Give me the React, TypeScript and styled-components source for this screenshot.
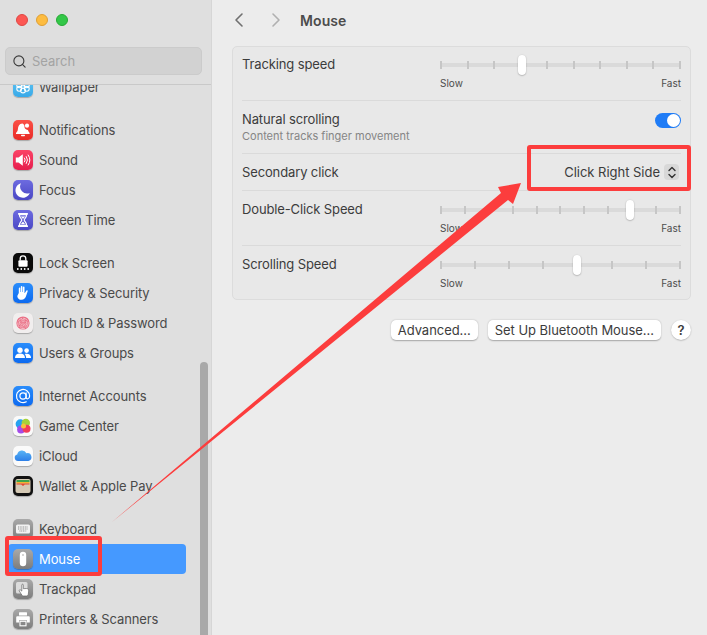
import React from 'react';
import styled, { createGlobalStyle } from 'styled-components';
import { ChevronLeft, ChevronRight, Search } from 'lucide-react';

const GlobalStyle = createGlobalStyle`
  html, body { margin: 0; padding: 0; height: 100%; }
  body { font-family: Inter, "Liberation Sans", sans-serif; overflow: hidden; }
`;

const ScWindow = styled.div`
  position: relative;
  display: flex;
  width: 707px;
  height: 635px;
  overflow: hidden;
  background: #ececec;
`;

const ScSidebar = styled.aside`
  position: relative;
  flex: 0 0 212px;
  display: flex;
  flex-direction: column;
  background: #dfdfdf;
  border-right: 1px solid #d6d6d6;
  box-sizing: border-box;
  overflow: hidden;
`;

const ScSideHead = styled.div`
  flex: 0 0 85px;
  box-sizing: border-box;
  padding: 14px 5px 0;
  border-bottom: 1px solid #c9c9c9;
`;

const ScLights = styled.div`
  display: flex;
  gap: 8px;
  padding-left: 11px;
  margin-bottom: 21px;
`;

const ScLight = styled.span<{ $c: string; $b: string }>`
  width: 12px;
  height: 12px;
  border-radius: 50%;
  box-sizing: border-box;
  background: ${p => p.$c};
  border: 1px solid ${p => p.$b};
`;

const ScSearch = styled.div`
  height: 28px;
  width: 197px;
  box-sizing: border-box;
  display: flex;
  align-items: center;
  gap: 5px;
  padding-left: 6px;
  background: #d2d2d2;
  border: 1px solid #cbcbcb;
  border-radius: 5px;
  font-size: 13px;
  color: #a3a3a3;
`;

const ScClip = styled.div`
  flex: 1;
  overflow: hidden;
`;

const ScList = styled.div`
  margin-top: -13px;
  display: flex;
  flex-direction: column;
  gap: 13px;
`;

const ScGroup = styled.div`
  display: flex;
  flex-direction: column;
`;

const ScRow = styled.div<{ $active?: boolean }>`
  height: 30px;
  margin: 0 25px 0 8px;
  padding-left: 5px;
  display: flex;
  align-items: center;
  gap: 6px;
  border-radius: 4px;
  font-size: 13px;
  letter-spacing: -0.1px;
  color: ${p => (p.$active ? '#fff' : '#4a4a4a')};
  background: ${p => (p.$active ? '#4599ff' : 'transparent')};
`;

const ScTile = styled.span<{ $bg: string }>`
  flex: 0 0 20px;
  height: 20px;
  border-radius: 5px;
  background: ${p => p.$bg};
  box-shadow: 0 1px 1px rgba(0, 0, 0, 0.25);
  display: flex;
  align-items: center;
  justify-content: center;
  svg { display: block; }
`;

const ScScrollbar = styled.div`
  position: absolute;
  left: 200px;
  top: 362px;
  width: 8px;
  height: 290px;
  border-radius: 4px;
  background: #a9a9a9;
`;

const ScMain = styled.main`
  flex: 1;
  display: flex;
  flex-direction: column;
  padding: 0 16px 0 20px;
  min-width: 0;
`;

const ScToolbar = styled.div`
  height: 46px;
  flex: 0 0 46px;
  display: flex;
  align-items: center;
  padding-bottom: 6px;
  box-sizing: border-box;
  color: #6b6b6b;
`;

const ScNav = styled.span<{ $off?: boolean }>`
  display: flex;
  margin-right: 13px;
  color: ${p => (p.$off ? '#b0b0b0' : '#707070')};
  &:first-child { margin-left: -5px; }
`;

const ScTitle = styled.h1`
  margin: 0 0 0 -1px;
  font-size: 14px;
  font-weight: 600;
  letter-spacing: 0.1px;
  color: #4c4c4c;
`;

const ScCard = styled.section`
  background: #e8e8e8;
  border: 1px solid #dcdcdc;
  border-radius: 5px;
  padding: 0 9px;
  box-sizing: border-box;
`;

const ScCardRow = styled.div<{ $h: number; $last?: boolean; $center?: boolean }>`
  height: ${p => p.$h}px;
  box-sizing: border-box;
  display: flex;
  justify-content: space-between;
  align-items: ${p => (p.$center ? 'center' : 'stretch')};
  border-bottom: ${p => (p.$last ? 'none' : '1px solid #dadada')};
`;

const ScLabel = styled.div<{ $top?: number }>`
  padding-top: ${p => p.$top ?? 0}px;
  font-size: 13px;
  line-height: 16px;
  letter-spacing: -0.13px;
  color: #3c3c3c;
`;

const ScLabelStack = styled.div`
  padding-top: 10px;
`;

const ScSub = styled.div`
  margin-top: 2px;
  font-size: 11px;
  line-height: 14px;
  color: #858585;
`;

const ScSliderCol = styled.div<{ $top: number }>`
  width: 241px;
  padding-top: ${p => p.$top}px;
`;

const ScTrack = styled.div`
  position: relative;
  height: 16px;
  display: flex;
  justify-content: space-between;
  align-items: center;
  &::before {
    content: '';
    position: absolute;
    left: 0;
    right: 0;
    top: 6px;
    height: 4px;
    background: #dadada;
  }
`;

const ScTick = styled.span`
  position: relative;
  width: 2px;
  height: 8px;
  background: #c6c6c6;
`;

const ScThumb = styled.span<{ $left: number }>`
  position: absolute;
  top: 0;
  left: ${p => p.$left}px;
  width: 8px;
  height: 20px;
  margin-top: -2px;
  margin-left: -4px;
  border-radius: 4px;
  background: #fff;
  box-shadow: 0 0.5px 1.5px rgba(0, 0, 0, 0.35);
`;

const ScEnds = styled.div`
  display: flex;
  justify-content: space-between;
  margin-top: 4px;
  font-size: 10px;
  line-height: 13px;
  color: #4c4c4c;
`;

const ScToggle = styled.span`
  position: relative;
  align-self: flex-start;
  margin-top: 12px;
  width: 26px;
  height: 15px;
  border-radius: 8px;
  background: #1f7cf6;
  &::after {
    content: '';
    position: absolute;
    right: 1px;
    top: 1px;
    width: 13px;
    height: 13px;
    border-radius: 50%;
    background: #fff;
  }
`;

const ScSelect = styled.div`
  display: flex;
  align-items: center;
  gap: 4px;
  margin-right: 2px;
  font-size: 13px;
  letter-spacing: -0.02px;
  color: #3c3c3c;
`;

const ScStepper = styled.span`
  width: 15px;
  height: 16px;
  border-radius: 4px;
  background: #d8d8d8;
  display: flex;
  align-items: center;
  justify-content: center;
`;

const ScActions = styled.div`
  display: flex;
  justify-content: flex-end;
  align-items: center;
  gap: 10px;
  margin-top: 20px;
`;

const ScButton = styled.button`
  height: 20px;
  padding: 0 7px;
  border: none;
  border-radius: 5px;
  background: #fff;
  box-shadow: 0 0.5px 1.5px rgba(0, 0, 0, 0.3);
  font-family: inherit;
  font-size: 13px;
  letter-spacing: -0.04px;
  color: #3c3c3c;
`;

const ScHelp = styled(ScButton)`
  width: 20px;
  padding: 0;
  border-radius: 50%;
  font-weight: 600;
`;

const ScMark = styled.div<{ $x: number; $y: number; $w: number; $h: number }>`
  position: absolute;
  left: ${p => p.$x}px;
  top: ${p => p.$y}px;
  width: ${p => p.$w}px;
  height: ${p => p.$h}px;
  box-sizing: border-box;
  border: 4px solid #fc3d3d;
  border-radius: 3px;
`;

const ScArrow = styled.svg`
  position: absolute;
  left: 0;
  top: 0;
  pointer-events: none;
`;

const W = (p: { children: React.ReactNode }) => (
  <svg width="20" height="20" viewBox="0 0 20 20" fill="#fff">{p.children}</svg>
);

const ICONS: Record<string, React.ReactNode> = {
  wallpaper: (
    <W>
      <g fill="none" stroke="#fff" strokeWidth="1.1">
        <circle cx="10" cy="6.500" r="2.400" /><circle cx="10" cy="13.500" r="2.400" />
        <circle cx="6.200" cy="8.300" r="2.400" /><circle cx="13.800" cy="8.300" r="2.400" />
        <circle cx="6.200" cy="11.800" r="2.400" /><circle cx="13.800" cy="11.800" r="2.400" />
      </g>
    </W>
  ),
  bell: (
    <W>
      <path d="M9.200 3.500c-2.900.3-4.100 2.800-4.300 5.500-.1 1.700-.8 2.800-1.900 3.900v1.100h13.600v-1.100c-.9-.9-1.400-1.800-1.700-3-2.100.1-3.800-1.700-3.500-3.900.1-.8-1.300-2.600-2.200-2.500z" />
      <circle cx="14" cy="5.700" r="2.100" />
      <rect x="8" y="14.800" width="4" height="1.500" rx=".7" />
    </W>
  ),
  sound: (
    <W>
      <path d="M2.800 7.600h2.700L9.800 4.200v11.600L5.500 12.400H2.800z" />
      <path d="M11.500 8a3.200 3.200 0 0 1 0 4M13.300 6.500a6 6 0 0 1 0 7M15.200 5a8.800 8.800 0 0 1 0 10" fill="none" stroke="#fff" strokeWidth="1" strokeLinecap="round" />
    </W>
  ),
  moon: (
    <W><path d="M8 3.200a7 7 0 0 0 8.800 9.800A7.400 7.400 0 1 1 8 3.200z" /></W>
  ),
  hourglass: (
    <W>
      <rect x="5" y="3" width="10" height="1.700" rx=".6" />
      <rect x="5" y="15.300" width="10" height="1.700" rx=".6" />
      <path d="M6.400 4.700h7.200c0 3-2.400 3.800-2.400 5.300s2.400 2.300 2.400 5.300H6.400c0-3 2.400-3.800 2.400-5.300S6.400 7.700 6.400 4.700z" fill="none" stroke="#fff" strokeWidth="1.200" />
      <path d="M7.800 14.300l2.200-2.900 2.200 2.900zM7.800 6.500h4.400L10 9z" />
    </W>
  ),
  lock: (
    <W>
      <path d="M7.200 7.500V5.600a2.800 2.800 0 0 1 5.600 0v1.900" fill="none" stroke="#fff" strokeWidth="1.300" />
      <rect x="5.400" y="7.200" width="9.200" height="6.600" rx="1" />
      <g><circle cx="4.800" cy="16" r=".9" /><circle cx="8.300" cy="16" r=".9" /><circle cx="11.700" cy="16" r=".9" /><circle cx="15.200" cy="16" r=".9" /></g>
    </W>
  ),
  hand: (
    <W>
      <path d="M5.800 10V5.400c0-1.100 1.500-1.100 1.500 0V9h.5V3.800c0-1.100 1.600-1.100 1.600 0V9h.5V4.300c0-1.100 1.600-1.100 1.600 0V10l.4.100 1.200-2.200c.6-1.100 2-.4 1.500.7l-1.700 5c-.7 2-2.100 3.200-4.200 3.200-2.600 0-4.400-1.500-4.400-3.900z" />
    </W>
  ),
  finger: (
    <W>
      <circle cx="10" cy="10" r="6.600" fill="#ea6f85" />
      <g fill="none" stroke="#f7dbe0" strokeWidth=".7">
        <circle cx="10" cy="10.400" r="5.200" strokeDasharray="5 1" />
        <circle cx="10" cy="10.400" r="3.700" strokeDasharray="4 1" />
        <circle cx="10" cy="10.400" r="2.200" strokeDasharray="3 1" />
        <path d="M10 9.500v3" />
      </g>
    </W>
  ),
  users: (
    <W>
      <circle cx="7" cy="7.300" r="2.700" /><circle cx="13.600" cy="7.600" r="2.300" />
      <path d="M2 15c0-2.900 2.100-4.400 5-4.400s5 1.500 5 4.400zM13.100 15c0-1.700-.5-3-1.500-3.900 3-1.300 6.500.2 6.500 3.900z" />
    </W>
  ),
  at: (
    <W>
      <circle cx="10" cy="10" r="3.100" fill="none" stroke="#fff" strokeWidth="1.200" />
      <path d="M13.100 6.900v4.400c0 2.300 3.500 2.100 3.500-1.300A6.600 6.600 0 1 0 13.300 15.800" fill="none" stroke="#fff" strokeWidth="1.200" strokeLinecap="round" />
    </W>
  ),
  game: (
    <W>
      <circle cx="7.300" cy="8" r="4.700" fill="#27a2f0" /><circle cx="12.800" cy="7" r="4.200" fill="#a6d23a" />
      <circle cx="8" cy="13.500" r="3.900" fill="#a44be8" /><circle cx="13.500" cy="12.800" r="4" fill="#f23c5b" />
      <circle cx="10.500" cy="10" r="2.500" fill="#f6c13a" />
    </W>
  ),
  cloud: (
    <W>
      <defs>
        <linearGradient id="icloud" x1="0" y1="0" x2="0" y2="1">
          <stop offset="0" stopColor="#58b4f5" /><stop offset="1" stopColor="#2d7fe8" />
        </linearGradient>
      </defs>
      <path d="M5 15a3.300 3.300 0 0 1-.8-6.500 4.900 4.900 0 0 1 9.200-1.300 3.900 3.900 0 0 1 2 7.800z" fill="url(#icloud)" />
    </W>
  ),
  wallet: (
    <W>
      <rect x="2.500" y="3" width="15" height="14" rx="2" fill="#d5cab6" />
      <rect x="3.500" y="4" width="13" height="2" fill="#3fa34d" />
      <rect x="3.500" y="6" width="13" height="1.500" fill="#f3b430" />
      <path d="M3.500 7.500h13v1H11.800l-1.800 1.500-1.800-1.500H3.500z" fill="#e4472f" />
    </W>
  ),
  keyboard: (
    <W>
      <rect x="3" y="5.500" width="14" height="9" rx="1.500" fill="#f2f2f2" />
      <path d="M5 8h10M5 10h10M6.500 12h7" stroke="#8b8b8b" strokeWidth="1.100" strokeDasharray="1 .7" />
    </W>
  ),
  mouse: (
    <W><rect x="6.800" y="2.800" width="6.400" height="14.400" rx="3.200" /><rect x="9.500" y="5" width="1" height="2" rx=".5" fill="#a8a8a8" /></W>
  ),
  trackpad: (
    <W>
      <rect x="3" y="3" width="11.500" height="11.500" rx="1.500" fill="#dcdcdc" />
      <path d="M8.800 6c0-1.100 1.500-1.100 1.500 0v3.700l3.100-.2c1.600 0 2.500 1 2.300 2.500l-.4 3.200c-.2 1.100-.9 1.800-2.100 1.800h-2.500c-.9 0-1.400-.3-1.900-1L6.300 12c-.5-.9.500-1.700 1.300-1l1.200 1.100z" stroke="#666" strokeWidth=".7" />
    </W>
  ),
  printer: (
    <W>
      <rect x="6" y="3.200" width="8" height="3.200" rx=".5" />
      <path d="M4.500 7.300h11c.8 0 1.300.5 1.300 1.300v5H14v-2.300H6v2.300H3.200v-5c0-.8.500-1.300 1.300-1.300z" />
      <rect x="7" y="12.300" width="6" height="4.500" fill="none" stroke="#fff" strokeWidth="1.100" />
    </W>
  ),
};

type Item = { name: string; icon: string; bg: string; active?: boolean };

const GREY = 'linear-gradient(#a9a9a9, #7d7d7d)';
const BLUE = 'linear-gradient(#2a8dfb, #0d6af0)';
const INDIGO = 'linear-gradient(#6d6be0, #4a47c4)';

const GROUPS: Item[][] = [
  [{ name: 'Wallpaper', icon: 'wallpaper', bg: 'linear-gradient(#63c6f2, #38a9e8)' }],
  [
    { name: 'Notifications', icon: 'bell', bg: 'linear-gradient(#fb5147, #e92a26)' },
    { name: 'Sound', icon: 'sound', bg: 'linear-gradient(#fb4467, #e61d4d)' },
    { name: 'Focus', icon: 'moon', bg: INDIGO },
    { name: 'Screen Time', icon: 'hourglass', bg: INDIGO },
  ],
  [
    { name: 'Lock Screen', icon: 'lock', bg: '#0a0a0a' },
    { name: 'Privacy & Security', icon: 'hand', bg: BLUE },
    { name: 'Touch ID & Password', icon: 'finger', bg: '#f1eeee' },
    { name: 'Users & Groups', icon: 'users', bg: BLUE },
  ],
  [
    { name: 'Internet Accounts', icon: 'at', bg: BLUE },
    { name: 'Game Center', icon: 'game', bg: '#fafafa' },
    { name: 'iCloud', icon: 'cloud', bg: '#fafafa' },
    { name: 'Wallet & Apple Pay', icon: 'wallet', bg: '#111' },
  ],
  [
    { name: 'Keyboard', icon: 'keyboard', bg: GREY },
    { name: 'Mouse', icon: 'mouse', bg: GREY, active: true },
    { name: 'Trackpad', icon: 'trackpad', bg: GREY },
    { name: 'Printers & Scanners', icon: 'printer', bg: GREY },
  ],
];

function Slider({ ticks, thumb, top = 10 }: { ticks: number; thumb: number; top?: number }) {
  return (
    <ScSliderCol $top={top}>
      <ScTrack>
        {Array.from({ length: ticks }, (_, i) => <ScTick key={i} />)}
        <ScThumb $left={thumb} />
      </ScTrack>
      <ScEnds><span>Slow</span><span>Fast</span></ScEnds>
    </ScSliderCol>
  );
}

export default function App() {
  return (
    <ScWindow>
      <GlobalStyle />
      <ScSidebar>
        <ScSideHead>
          <ScLights>
            <ScLight $c="#fc5753" $b="#df4744" />
            <ScLight $c="#fdbc40" $b="#de9f34" />
            <ScLight $c="#33c748" $b="#27aa35" />
          </ScLights>
          <ScSearch>
            <Search size={15} color="#3a3a3a" strokeWidth={1.8} />
            <span>Search</span>
          </ScSearch>
        </ScSideHead>
        <ScClip>
          <ScList>
            {GROUPS.map((g, i) => (
              <ScGroup key={i}>
                {g.map(item => (
                  <ScRow key={item.name} $active={item.active}>
                    <ScTile $bg={item.bg}>{ICONS[item.icon]}</ScTile>
                    {item.name}
                  </ScRow>
                ))}
              </ScGroup>
            ))}
          </ScList>
        </ScClip>
        <ScScrollbar />
      </ScSidebar>
      <ScMain>
        <ScToolbar>
          <ScNav><ChevronLeft size={24} strokeWidth={1.6} /></ScNav>
          <ScNav $off><ChevronRight size={24} strokeWidth={1.6} /></ScNav>
          <ScTitle>Mouse</ScTitle>
        </ScToolbar>
        <ScCard>
          <ScCardRow $h={54}>
            <ScLabel $top={9}>Tracking speed</ScLabel>
            <Slider ticks={10} thumb={82} />
          </ScCardRow>
          <ScCardRow $h={53}>
            <ScLabelStack>
              <ScLabel>Natural scrolling</ScLabel>
              <ScSub>Content tracks finger movement</ScSub>
            </ScLabelStack>
            <ScToggle />
          </ScCardRow>
          <ScCardRow $h={37} $center>
            <ScLabel>Secondary click</ScLabel>
            <ScSelect>
              Click Right Side
              <ScStepper>
                <svg width="10" height="13" viewBox="0 0 10 13" fill="none" stroke="#333" strokeWidth="1.400" strokeLinecap="round" strokeLinejoin="round">
                  <path d="M2 4.500l3-3 3 3M2 8.500l3 3 3-3" />
                </svg>
              </ScStepper>
            </ScSelect>
          </ScCardRow>
          <ScCardRow $h={55}>
            <ScLabel $top={10}>Double-Click Speed</ScLabel>
            <Slider ticks={11} thumb={190} top={11} />
          </ScCardRow>
          <ScCardRow $h={53} $last>
            <ScLabel $top={10}>Scrolling Speed</ScLabel>
            <Slider ticks={8} thumb={137} top={11} />
          </ScCardRow>
        </ScCard>
        <ScActions>
          <ScButton>Advanced...</ScButton>
          <ScButton>Set Up Bluetooth Mouse...</ScButton>
          <ScHelp>?</ScHelp>
        </ScActions>
      </ScMain>
      <ScMark $x={5} $y={536} $w={97} $h={40} />
      <ScMark $x={527} $y={145} $w={164} $h={46} />
      <ScArrow width="707" height="635" viewBox="0 0 707 635">
        <polygon points="521,183 498,187 501,193 112,522 508,200 513,204" fill="#fc3d3d" />
      </ScArrow>
    </ScWindow>
  );
}
